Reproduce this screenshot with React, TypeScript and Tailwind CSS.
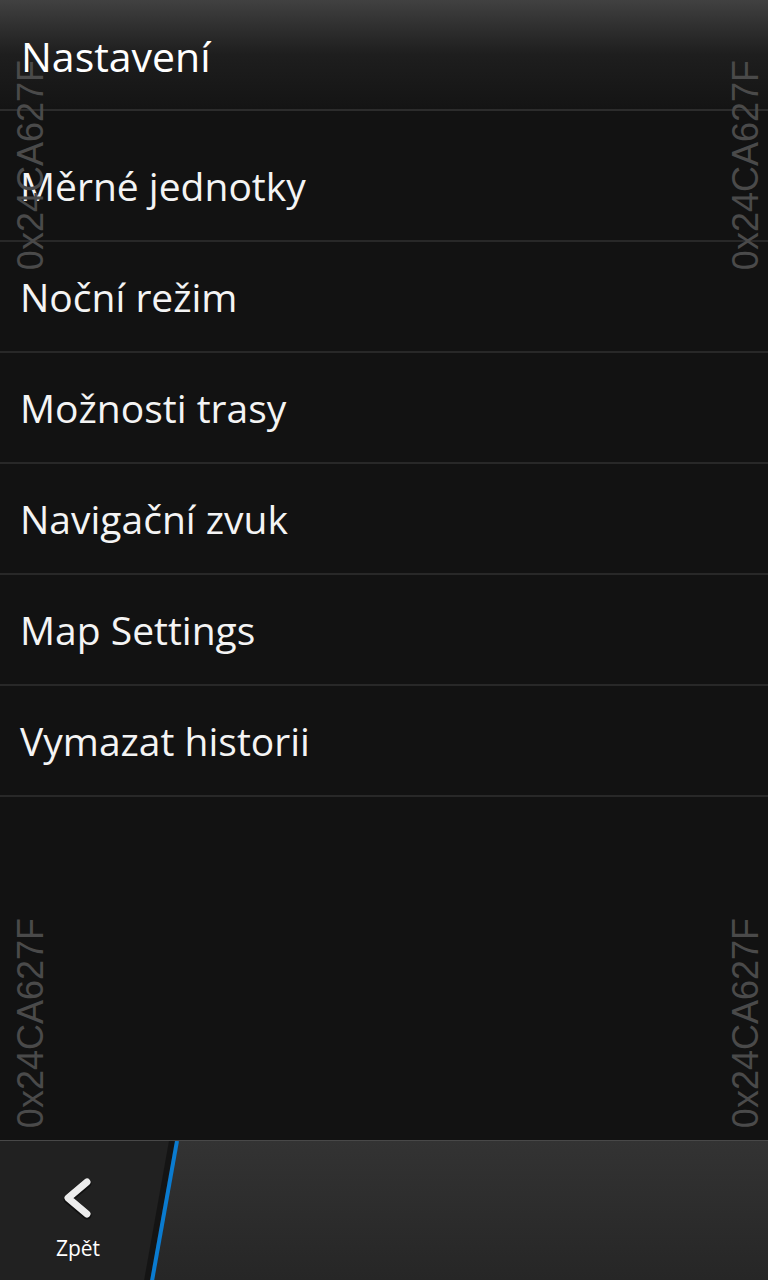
const items = [
  "Měrné jednotky",
  "Noční režim",
  "Možnosti trasy",
  "Navigační zvuk",
  "Map Settings",
  "Vymazat historii",
];

function Watermark({ className }: { className: string }) {
  return (
    <div
      className={`pointer-events-none absolute text-[36px] leading-none text-[#4a4a4a] [writing-mode:vertical-rl] rotate-180 ${className}`}
      style={{ fontFamily: '"Liberation Sans", Arial, sans-serif' }}
    >
      0x24CA627F
    </div>
  );
}

export default function App() {
  return (
    <div
      className="relative flex h-[1280px] w-[768px] flex-col overflow-hidden bg-[#121212] text-white"
      style={{ fontFamily: '"Open Sans", "Noto Sans", sans-serif' }}
    >
      {/* title bar */}
      <header className="flex h-[109px] shrink-0 items-center bg-gradient-to-b from-[#414141] via-[#1e1e1e] to-[#141414] px-[21px] pt-[4px]">
        <h1 className="text-[41px] font-normal leading-none">Nastavení</h1>
      </header>
      <div className="h-[2px] shrink-0 bg-[#2c2c2c]" />

      <ul className="mt-[20px] flex flex-col">
        {items.map((label) => (
          <li
            key={label}
            className="flex h-[111px] items-center border-b-2 border-[#282828] px-[20px]"
          >
            <span className="text-[39px] leading-none text-[#f4f4f4]">{label}</span>
          </li>
        ))}
      </ul>

      <div className="flex-1" />

      {/* action bar */}
      <footer className="relative h-[140px] shrink-0 border-t border-[#484848] bg-gradient-to-b from-[#333333] to-[#262626]">
        <div className="absolute inset-y-0 left-0 w-[180px] bg-[#212121] [clip-path:polygon(0_0,177px_0,152px_100%,0_100%)]" />
        <svg
          className="absolute inset-0"
          width="768"
          height="140"
          viewBox="0 0 768 140"
        >
          <line x1="172" y1="0" x2="147" y2="140" stroke="#0b0b0b" strokeWidth="6" opacity="0.55" />
          <line x1="177" y1="0" x2="152" y2="140" stroke="#0a7bd0" strokeWidth="4" />
        </svg>
        <button className="relative flex h-full w-[156px] flex-col items-center pt-[36px]">
          <svg width="40" height="44" viewBox="0 0 40 44">
            <polyline
              points="29,5 10,21 29,37"
              fill="none"
              stroke="#000"
              strokeOpacity="0.5"
              strokeWidth="9"
              strokeLinecap="round"
              strokeLinejoin="round"
              transform="translate(0 1)"
            />
            <polyline
              points="29,5 10,21 29,37"
              fill="none"
              stroke="#ececec"
              strokeWidth="7"
              strokeLinecap="round"
              strokeLinejoin="round"
            />
          </svg>
          <span className="mt-[17px] text-[21px] leading-none text-white">Zpět</span>
        </button>
      </footer>

      <Watermark className="left-[13px] top-[60px]" />
      <Watermark className="right-[4px] top-[60px]" />
      <Watermark className="left-[13px] top-[918px]" />
      <Watermark className="right-[4px] top-[918px]" />
    </div>
  );
}
